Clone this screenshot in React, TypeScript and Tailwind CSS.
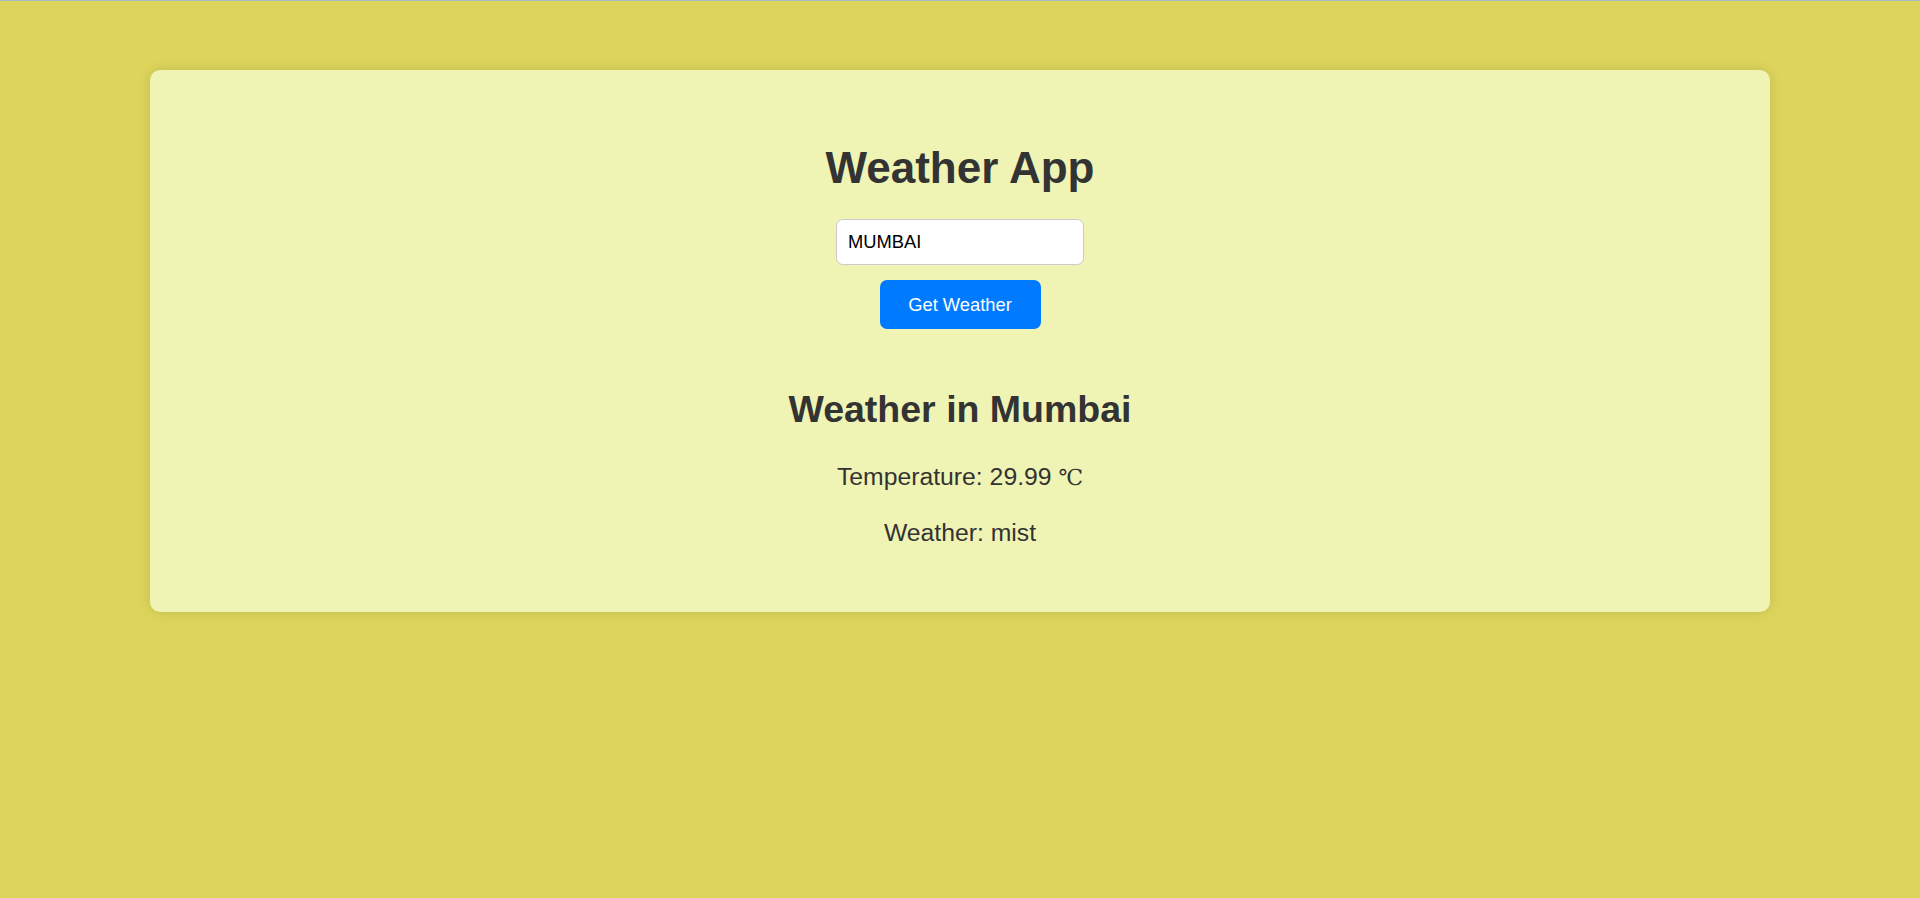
import React from "react";

export default function App() {
  return (
    <div className="min-h-screen w-full bg-[#ddd55b] font-['Liberation_Sans',Arial,sans-serif] text-[#333333]">
      <div className="h-px w-full bg-[#a6b9c4]" />
      <div className="pt-[69px] pb-10">
        <div className="mx-[150px] rounded-[10px] bg-[#eff4b4] shadow-[0_0_14px_rgba(0,0,0,0.12)] pt-[72px] pb-[65px] flex flex-col items-center">
          <h1 className="text-[44px] font-bold leading-[51px] m-0">Weather App</h1>
          <input
            type="text"
            defaultValue="MUMBAI"
            className="mt-[26px] w-[248px] h-[46px] rounded-[7px] border border-[#cccccc] bg-white px-[11px] text-[18.33px] text-black outline-none font-['Liberation_Sans',Arial,sans-serif]"
          />
          <button className="mt-[15px] w-[161px] h-[49px] rounded-[7px] bg-[#007bff] text-white text-[18.33px] font-['Liberation_Sans',Arial,sans-serif]">
            Get Weather
          </button>
          <h2 className="mt-[59px] text-[37.5px] font-bold leading-[43px]">Weather in Mumbai</h2>
          <p className="mt-[32px] text-[24.75px] leading-[28.5px]">
            Temperature: 29.99{" "}
            <span className="font-['DejaVu_Serif',serif] text-[22px]">℃</span>
          </p>
          <p className="mt-[26px] text-[24.75px] leading-[28.5px]">Weather: mist</p>
        </div>
      </div>
    </div>
  );
}
